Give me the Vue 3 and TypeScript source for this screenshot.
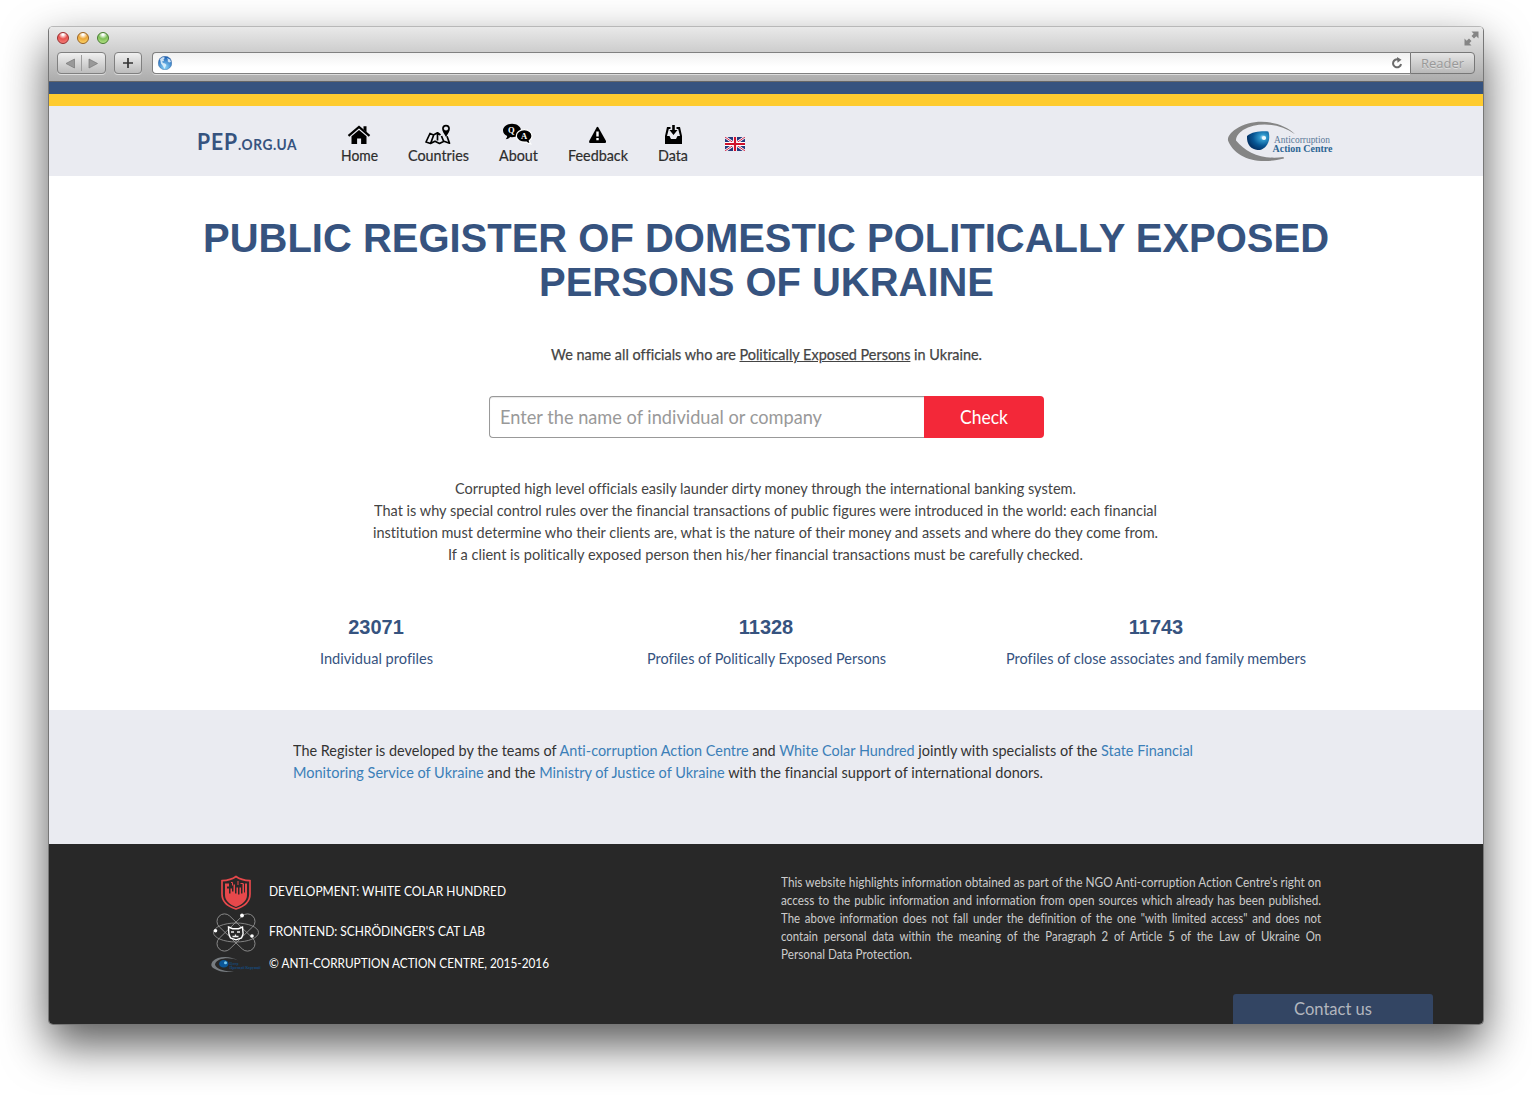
<script setup lang="ts">
import type { Directive } from 'vue'

// Condenses a single line of text horizontally to the given width in pixels.
const vFit: Directive<HTMLElement, number> = {
  mounted(el, { value }) {
    const natural = el.getBoundingClientRect().width
    el.style.transform = `scaleX(${value / natural})`
    el.style.marginRight = `${value - natural}px`
  },
}

interface Line { text: string; width: number; spacing?: number }

const heading: Line[] = [
  { text: 'PUBLIC REGISTER OF DOMESTIC POLITICALLY EXPOSED', width: 1126 },
  { text: 'PERSONS OF UKRAINE', width: 455 },
]

const intro: Line[] = [
  { text: 'Corrupted high level officials easily launder dirty money through the international banking system.', width: 621 },
  { text: 'That is why special control rules over the financial transactions of public figures were introduced in the world: each financial', width: 783 },
  { text: 'institution must determine who their clients are, what is the nature of their money and assets and where do they come from.', width: 785 },
  { text: 'If a client is politically exposed person then his/her financial transactions must be carefully checked.', width: 635 },
]

const stats = [
  { value: '23071', label: 'Individual profiles', width: 113 },
  { value: '11328', label: 'Profiles of Politically Exposed Persons', width: 239 },
  { value: '11743', label: 'Profiles of close associates and family members', width: 300 },
]

const notice: Line[] = [
  { text: "This website highlights information obtained as part of the NGO Anti-corruption Action Centre's right on", width: 540, spacing: 0 },
  { text: 'access to the public information and information from open sources which already has been published.', width: 540, spacing: 1.2 },
  { text: 'The above information does not fall under the definition of the one "with limited access" and does not', width: 540, spacing: 2.2 },
  { text: 'contain personal data within the meaning of the Paragraph 2 of Article 5 of the Law of Ukraine On', width: 540, spacing: 3.4 },
  { text: 'Personal Data Protection.', width: 131, spacing: 0 },
]
</script>

<template>
  <div class="page">
    <div class="window">
      <header class="chrome">
        <div class="titlebar">
          <i class="light red"></i><i class="light amber"></i><i class="light green"></i>
          <svg class="expand" width="15" height="15" viewBox="0 0 15 15">
            <path d="M7.500 .5H14.500V7.500L12.300 5.300 10 7.500 7.500 5 9.700 2.700zM.5 7.500l2.200 2.200L5 7.500 7.500 10 5.300 12.300 7.500 14.500H.5z" fill="#858585" />
          </svg>
        </div>
        <div class="toolbar">
          <div class="btn arrows">
            <svg width="47" height="20" viewBox="0 0 47 20">
              <path d="M8 10.500L16.500 6v9zM39.500 10.500L31 6v9z" fill="#999" stroke="#777" stroke-width=".7" />
              <path d="M23.500 2v16" stroke="#9c9c9c" />
            </svg>
          </div>
          <div class="btn plus">
            <svg width="26" height="20" viewBox="0 0 26 20"><path d="M13 5v10M8 10h10" stroke="#333" stroke-width="1.700" /></svg>
          </div>
          <div class="address">
            <svg width="14" height="14" viewBox="0 0 14 14">
              <defs>
                <radialGradient id="globe" cx=".5" cy=".8" r=".75"><stop offset="0" stop-color="#8bd6fa" /><stop offset="1" stop-color="#1d60b4" /></radialGradient>
              </defs>
              <circle cx="7" cy="7" r="6.800" fill="url(#globe)" stroke="#315f96" stroke-width=".4" />
              <path d="M2 3l3-2 2 .7L5.500 3.500 6 5 4 5.500 5 7 7 7.500 8.500 9 7 11.500 6.500 13 5 10 3 7.500zM9 2l3 1.500 1 2.500-2 .5-1.500-1.500L10 4z" fill="#e9f4fb" opacity=".85" />
            </svg>
            <svg width="12" height="12" viewBox="0 0 12 12">
              <path d="M7.500 2.600A4 4 0 1 0 10 7" fill="none" stroke="#6a6a6a" stroke-width="2" />
              <path d="M6 0l4.500 2.700L6.500 5.700z" fill="#6a6a6a" />
            </svg>
          </div>
          <div class="reader"><span v-fit="43" class="fit">Reader</span></div>
        </div>
      </header>

      <div class="stripe blue"></div>
      <div class="stripe yellow"></div>

      <nav class="nav">
        <a class="brand"><b v-fit="41" class="fit">PEP</b><span v-fit="59" class="fit">.ORG.UA</span></a>
        <a class="item">
          <svg width="32" height="22" viewBox="0 0 32 22">
            <path d="M16 7l7.500 6.300V21h-5.400v-5.500h-4V21H8.500v-7.700z" />
            <path d="M5.500 12.800L16 3.900l10.500 8.900" fill="none" stroke="#000" stroke-width="2.200" />
            <path d="M20.500 3.200h3v6l-3-2.600z" />
          </svg>
          <span v-fit="37" class="fit">Home</span>
        </a>
        <a class="item">
          <svg width="32" height="22" viewBox="0 0 32 22" fill="none" stroke="#000" stroke-width="1.700" stroke-linejoin="round">
            <path d="M18.500 12L15.500 9.800 11.500 12 8 10.500 4 19l4.500 1.500 4.500-2.300 4.500 2.300 4.500-2.300 5.500 2-2.500-7M11.500 12.500L8.800 20M15.500 10v7.500M19.500 13l2 5" />
            <path d="M24 14c-2-3.500-3.900-5.500-3.900-8.400a3.900 3.900 0 0 1 7.800 0c0 2.900-1.900 4.900-3.900 8.400z" fill="#000" stroke="none" />
            <circle cx="24" cy="5.500" r="2.100" fill="#eaebf1" stroke="none" />
          </svg>
          <span v-fit="61" class="fit">Countries</span>
        </a>
        <a class="item">
          <svg width="32" height="22" viewBox="0 0 32 22">
            <path d="M10 .8c5 0 9 2.900 9 6.700s-4 6.700-9 6.700l-1.800-.1C7 15.500 5.500 16.300 3.700 16.300c.8-1 1.400-2.200 1.500-3.300C2.600 11.800 1 9.800 1 7.500 1 3.700 5 .8 10 .8z" />
            <path d="M22.300 6.700c4.400 0 7.700 2.700 7.700 6.200 0 2-1 3.700-2.700 4.900.1 1.200.7 2.200 1.500 3.100-2 0-3.600-.7-4.800-1.900-5.300.6-9.700-2-9.700-6.100 0-3.500 3.500-6.200 8-6.200z" stroke="#fff" stroke-width="1.200" />
            <text x="9.300" y="10.300" class="bubble" text-anchor="middle">Q</text>
            <text x="22" y="16.300" class="bubble" text-anchor="middle">A</text>
          </svg>
          <span v-fit="39" class="fit">About</span>
        </a>
        <a class="item">
          <svg width="32" height="22" viewBox="0 0 32 22">
            <path d="M14.600 4.400q.9-1.400 1.800 0l7.600 13.600q.5 1.800-1 2H8q-1.400-.2-.8-2z" />
            <path d="M15.500 8.500v5M15.500 15v2.300" stroke="#fff" stroke-width="2.400" />
          </svg>
          <span v-fit="60" class="fit">Feedback</span>
        </a>
        <a class="item">
          <svg width="32" height="22" viewBox="0 0 32 22">
            <path d="M10 4h3.500v2h-1.700L10 13h2.500l1.500 3h5l1.500-3H23l-1.800-7h-1.700V4H23l2 9v8H8v-8z" />
            <path d="M15.200 2h2.600v5h2.700l-4 5-4-5h2.700z" />
          </svg>
          <span v-fit="30" class="fit">Data</span>
        </a>
        <svg class="flag" width="20" height="14" viewBox="0 0 20 14">
          <path d="M0 0h20v14H0z" fill="#26397d" />
          <path d="M0 0l20 14M20 0L0 14" stroke="#fff" stroke-width="2.600" />
          <path d="M0 0l20 14M20 0L0 14" stroke="#d3264b" stroke-width="1" />
          <path d="M10 0v14M0 7h20" stroke="#fff" stroke-width="4" />
          <path d="M10 0v14M0 7h20" stroke="#cf112c" stroke-width="2.200" />
        </svg>
        <svg class="logo" width="107" height="42" viewBox="0 0 107 42">
          <defs>
            <radialGradient id="iris" cx=".72" cy=".32" r=".75">
              <stop offset="0" stop-color="#bfe8fb" /><stop offset=".2" stop-color="#3098cc" /><stop offset=".6" stop-color="#075694" /><stop offset="1" stop-color="#032f62" />
            </radialGradient>
          </defs>
          <path d="M68 14.200C55 1 27 -3 9 9 3 13 .5 17 1 20.500 7 36 27 46 57 38.500l-.5-1.500C36 40 19 33 9 20.500 9 16 12 13 16 10 31 1.500 52 3 68 14.200z" fill="#858585" />
          <path d="M20 16c5-4.500 15-5 21.300-4.500 1 2 1.200 5.500.7 8.500-1.500 7-7 10.500-11.500 10-6-1-11-4.500-10.500-14z" fill="url(#iris)" />
          <circle cx="37" cy="18" r="2.100" fill="#eefaff" />
          <text x="47" y="23" textLength="56" lengthAdjust="spacingAndGlyphs" class="logo-text">Anticorruption</text>
          <text x="45.500" y="31.700" textLength="60" lengthAdjust="spacingAndGlyphs" class="logo-text strong">Action Centre</text>
        </svg>
      </nav>

      <main class="main">
        <h1>
          <div v-for="line in heading" :key="line.text"><span v-fit="line.width" class="fit">{{ line.text }}</span></div>
        </h1>
        <p class="lead"><span v-fit="431" class="fit">We name all officials who are <u>Politically Exposed Persons</u> in Ukraine.</span></p>
        <div class="search">
          <div class="field"><span v-fit="322" class="fit">Enter the name of individual or company</span></div>
          <div class="check"><span v-fit="48" class="fit">Check</span></div>
        </div>
        <div class="intro">
          <div v-for="line in intro" :key="line.text"><span v-fit="line.width" class="fit">{{ line.text }}</span></div>
        </div>
        <div class="stats">
          <div v-for="s in stats" :key="s.value" class="stat">
            <strong>{{ s.value }}</strong>
            <div><span v-fit="s.width" class="fit">{{ s.label }}</span></div>
          </div>
        </div>
      </main>

      <section class="about">
        <div><span v-fit="900" class="fit">The Register is developed by the teams of <a>Anti-corruption Action Centre</a> and <a>White Colar Hundred</a> jointly with specialists of the <a>State Financial</a></span></div>
        <div><span v-fit="750" class="fit"><a>Monitoring Service of Ukraine</a> and the <a>Ministry of Justice of Ukraine</a> with the financial support of international donors.</span></div>
      </section>

      <footer class="footer">
        <div class="credits">
          <div class="credit first">
            <svg width="50" height="36" viewBox="0 0 50 36">
              <path d="M25 2c4 3 9 4 14 4.200V19.500c0 8-6 12.500-14 15C17 32 11 27.500 11 19.500V6.200C16 6 21 5 25 2z" fill="none" stroke="#e6484b" stroke-width="1.700" />
              <path d="M14 20V9h4v3h-2v2h2v5h1.500v-5H21v3h1.500V10H24v9h1.500v-6H27v7h1.500v-7H30v6h1.500V9H33v9h1V9h2v11.500c0 6-5 9.500-11 12-6-2.500-11-6-11-12z" fill="#e6484b" />
              <path d="M20 8h1.500v3M27 6.500v4M29.500 9H32" fill="none" stroke="#e6484b" />
            </svg>
            <span v-fit="237" class="fit">DEVELOPMENT: WHITE COLAR HUNDRED</span>
          </div>
          <div class="credit second">
            <svg width="50" height="40" viewBox="0 0 50 40">
              <g fill="none" stroke="#999" stroke-width=".8">
                <ellipse cx="25" cy="20" rx="22.500" ry="9.500" />
                <rect x="1.500" y="12.500" width="47" height="15" rx="7.500" transform="rotate(44 25 20)" />
                <rect x="1.500" y="12.500" width="47" height="15" rx="7.500" transform="rotate(-44 25 20)" />
              </g>
              <path d="M17.500 14.500l4 1.700h6l4-1.700.6 7-1.600 4-5.500 1.800-5.500-1.800-1.600-4z" fill="#282828" stroke="#fff" stroke-width="1.400" />
              <path d="M20 19.500h3M26 19.500h3M21.500 24h6M24.500 22v2" stroke="#eee" stroke-width="1.300" />
              <circle cx="31" cy="3" r="1.900" fill="#fff" /><circle cx="4.500" cy="18.300" r="1.800" fill="#fff" /><circle cx="41" cy="23.500" r="1.800" fill="#fff" />
            </svg>
            <span v-fit="216" class="fit">FRONTEND: SCHRÖDINGER'S CAT LAB</span>
          </div>
          <div class="credit third">
            <svg width="50" height="16" viewBox="0 0 50 16">
              <path d="M27 4C20-.5 7-1 1.500 5-.5 8 0 10 3 12c6 4 14 4 20 2.700C13 15.500 4.500 12 4 8 5 1 20 0 27 4z" fill="#777c80" />
              <ellipse cx="12.800" cy="7.300" rx="4.700" ry="3.700" fill="#0b5698" /><circle cx="14.500" cy="6.300" r="1.500" fill="#78c8ef" />
              <text x="18.500" y="8" textLength="9" lengthAdjust="spacingAndGlyphs" class="tiny">Центр</text>
              <text x="18.500" y="12.500" textLength="31" lengthAdjust="spacingAndGlyphs" class="tiny">Протидії Корупції</text>
            </svg>
            <span v-fit="280" class="fit">© ANTI-CORRUPTION ACTION CENTRE, 2015-2016</span>
          </div>
        </div>
        <div class="notice">
          <div v-for="line in notice" :key="line.text">
            <span v-fit="line.width" class="fit" :style="{ wordSpacing: line.spacing + 'px' }">{{ line.text }}</span>
          </div>
        </div>
      </footer>
      <div class="contact"><span v-fit="78" class="fit">Contact us</span></div>
    </div>
  </div>
</template>

<style>
body { background: #fff; }
</style>

<style scoped>
* { box-sizing: border-box; }
.page { height: 1095px; padding: 26px 0 0 48px; overflow: hidden; background: #fff; }
.fit { display: inline-block; flex-shrink: 0; white-space: nowrap; transform-origin: 0 50%; }
.window {
  position: relative; width: 1436px; height: 999px;
  border: 1px solid #777; border-top-color: #b8b8b8; border-radius: 5px; background: #fff;
  box-shadow: 0 20px 45px rgba(0, 0, 0, .65);
  font-family: Lato, sans-serif; font-size: 16px; line-height: 22px; color: #444;
  font-variant-ligatures: none;
}
.chrome { height: 55px; border-radius: 4px 4px 0 0; background: linear-gradient(#e9e9e9, #cbcbcb 50%, #acacac); border-bottom: 1px solid #666; }
.titlebar { display: flex; align-items: center; gap: 8px; height: 25px; padding: 0 4px 3px 8px; }
.light { width: 12px; height: 12px; border-radius: 50%; border: 1px solid; }
.red { background: radial-gradient(circle at 50% 15%, #fff 0 8%, #e9524f 45%, #f58b84); border-color: #982b2e; }
.amber { background: radial-gradient(circle at 50% 15%, #fff 0 8%, #eda637 45%, #ffe276); border-color: #996222; }
.green { background: radial-gradient(circle at 50% 15%, #fff 0 8%, #7ec058 45%, #c4eb90); border-color: #467b30; }
.expand { margin-left: auto; }
.toolbar { display: flex; height: 22px; padding-left: 8px; }
.btn { height: 22px; border: 1px solid #808080; border-radius: 4px; background: linear-gradient(#f0f0f0, #bcbcbc); box-shadow: 0 1px #ddd; }
.btn svg { display: block; }
.arrows { width: 49px; }
.plus { width: 28px; margin-left: 8px; }
.address { display: flex; align-items: center; justify-content: space-between; width: 1258px; margin-left: 10px; padding: 0 7px 0 5px; border: 1px solid #808080; border-right: 0; border-radius: 4px 0 0 4px; background: linear-gradient(#f1f1f1, #fff 70%); box-shadow: 0 1px #ddd; }
.reader { width: 65px; padding-left: 10px; border: 1px solid #777; border-radius: 0 4px 4px 0; background: linear-gradient(#e5e5e5, #b9b9b9); font: 13px/21px "Open Sans", sans-serif; color: #999; text-shadow: 0 1px #ddd; }
.stripe { height: 12px; }
.blue { background: #36537f; }
.yellow { background: #fecb2f; }
.nav { display: flex; align-items: flex-start; height: 70px; padding: 17px 149px 0 148px; background: #eaebf1; }
.brand { display: flex; align-items: baseline; width: 100px; margin: 3px 44px 0 0; line-height: 30px; color: #36537f; }
.brand b { font-size: 23.5px; font-weight: 700; letter-spacing: 1px; }
.brand span { font-size: 15.5px; font-weight: 700; letter-spacing: .6px; }
.item { display: flex; flex-direction: column; align-items: flex-start; margin-right: 30px; color: #2d2d2d; }
.item svg { align-self: center; margin: 0 -8px -1px -9px; }
.item .fit { -webkit-text-stroke: .2px #2d2d2d; }
.bubble { font: bold 8.500px "Liberation Serif", serif; fill: #fff; }
.flag { margin: 14px 0 0 7px; }
.logo { margin: -3px 0 0 auto; overflow: visible; }
.logo-text { font: 10px "Liberation Serif", serif; fill: #5b7998; }
.logo-text.strong { font-weight: bold; fill: #2d6694; }
.main { height: 534px; padding-top: 40px; text-align: center; }
h1 { margin: 0; font: bold 40px/44px "Liberation Sans", Arial, sans-serif; color: #36537f; }
.lead { margin: 39px 0 31px; -webkit-text-stroke: .25px #444; }
.search { display: flex; width: 555px; height: 42px; margin: 0 auto 39px 440px; font-size: 20px; line-height: 40px; }
.field { width: 435px; padding-left: 10px; border: 1px solid #999; border-right: 0; border-radius: 4px 0 0 4px; color: #999; text-align: left; line-height: 39px; box-shadow: inset 0 1px 1px #e8e8e8; }
.check { width: 120px; padding-right: 1px; border-radius: 0 4px 4px 0; background: #f32839; color: #fff; }
.intro { margin-right: 1px; }
.stats { display: flex; width: 1170px; margin: 51px auto 0 132px; color: #36537f; }
.stat { width: 390px; text-align: center; }
.stat strong { display: block; margin-bottom: 9px; font: bold 20px/22px "Liberation Sans", Arial, sans-serif; }
.about { height: 134px; padding: 29px 0 0 244px; background: #eaebf1; color: #333; }
.about a { color: #3c7fb8; }
.footer { display: flex; height: 180px; padding: 29px 0 0 162px; border-radius: 0 0 4px 4px; background: #282828; color: #fff; }
.credits { width: 570px; font-size: 13.5px; }
.credit { display: flex; align-items: center; }
.credit svg { flex: none; margin-right: 8px; }
.credit svg { transform: translateY(1.500px); }
.first { height: 36px; }
.second { height: 44px; }
.third { height: 20px; }
.tiny { font: bold 4px "Liberation Serif", serif; fill: #164a7c; }
.notice { font-size: 13.3px; line-height: 18px; color: #ccc; }
.contact { position: absolute; right: 50px; bottom: 0; width: 200px; height: 30px; border-radius: 3px 3px 0 0; background: #334563; color: #b2b6be; font-size: 17px; line-height: 30px; text-align: center; }
</style>
